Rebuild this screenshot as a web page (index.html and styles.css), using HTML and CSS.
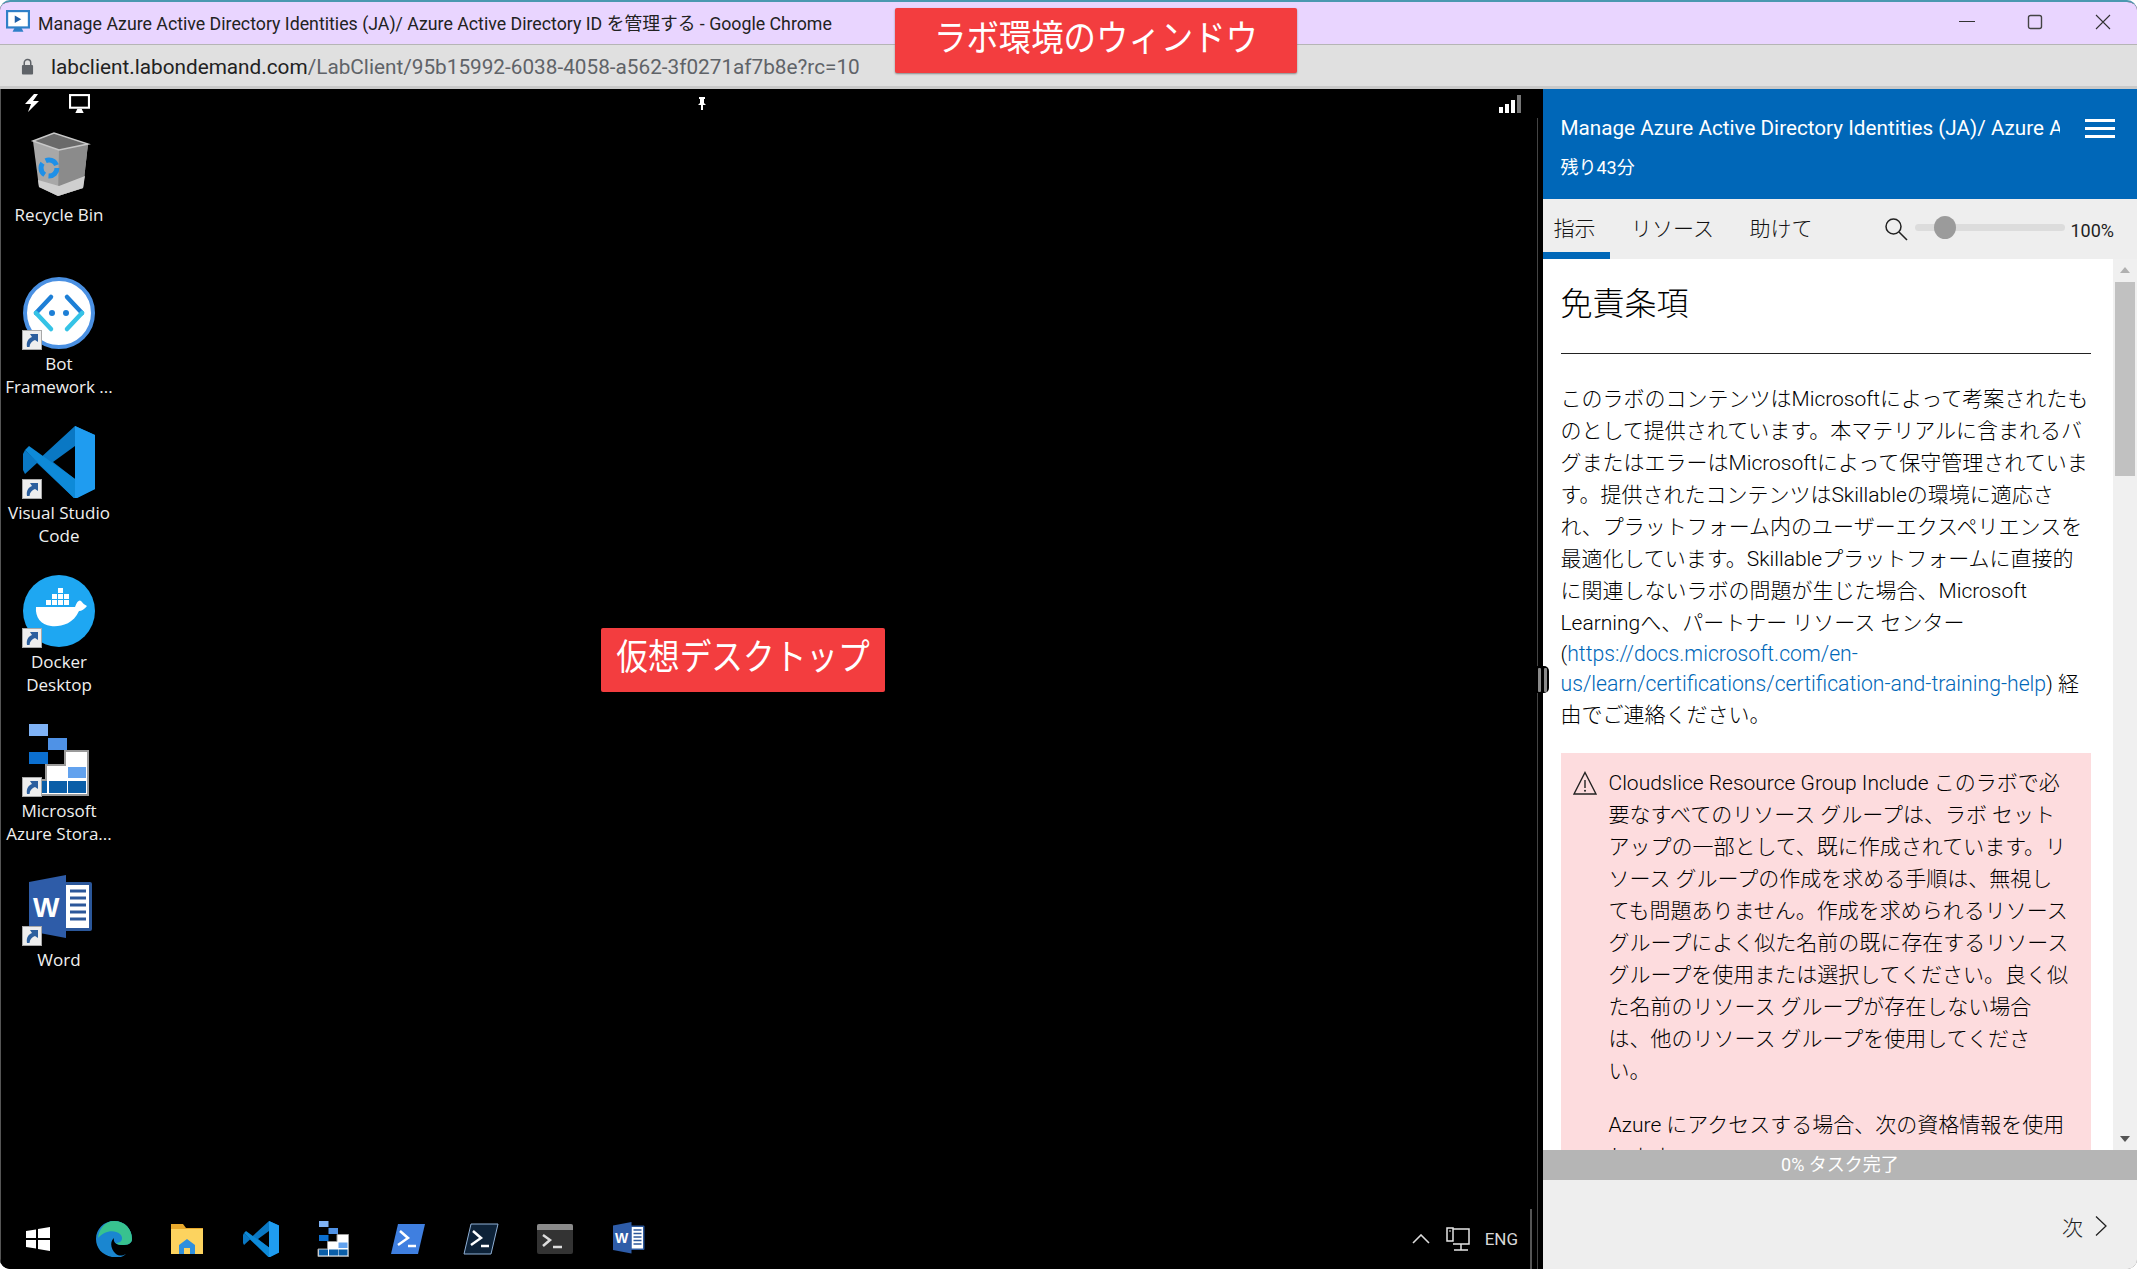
FILE: index.html
```html
<!DOCTYPE html>
<html lang="ja">
<head>
    <meta charset="utf-8"/>
    <title>Manage Azure Active Directory Identities</title>
    <link rel="stylesheet" href="styles.css">
</head>
<body>

<svg class="defs" width="0" height="0">
    <symbol id="shortcut" viewBox="0 0 20 20">
        <rect x="0.500" y="0.500" width="19" height="19" fill="#eeeeee" stroke="#a8a8a8"/>
        <path d="M5 17 C4 11 7 8 10 7 L8 4 H16 V12 L13 10 C10 11 8 13 7.500 17 Z" fill="#2c5f9e"/>
    </symbol>
    <symbol id="storage" viewBox="0 0 72 72">
        <path d="M42 27 H65 V71 H4 V56 H23 V41 H42 Z" fill="#fff" stroke="#9a9a9a" stroke-width="2"/>
        <rect x="6" y="0" width="19" height="12" fill="#7fb2f5"/>
        <rect x="25" y="14" width="19" height="12" fill="#4f92e6"/>
        <rect x="6" y="28" width="19" height="12" fill="#0b6fd0"/>
        <rect x="45" y="43" width="18" height="11" fill="#62a2ee"/>
        <rect x="6" y="57" width="18" height="12" fill="#0a5ea8"/>
        <rect x="26" y="57" width="18" height="12" fill="#0a5ea8"/>
        <rect x="45" y="57" width="18" height="12" fill="#0a5ea8"/>
    </symbol>
    <symbol id="vscode" viewBox="0 0 72 72">
        <path d="M52 0 L72 9 V63 L52 73 L14 37 L2 48 L0 44 V28 L2 24 L14 35 Z M52 20 L30 36 L52 53 Z" fill="#0a78c4" fill-rule="evenodd"/>
        <path d="M52 0 L72 9 V63 L52 73 Z" fill="#1f9cf0"/>
        <path d="M2 24 L6 20 L52 53 V73 Z" fill="#0e8ad8"/>
    </symbol>
    <symbol id="word" viewBox="0 0 72 72">
        <rect x="38" y="9" width="31" height="49" rx="2" fill="#2b579a"/>
        <rect x="43" y="12" width="23" height="43" fill="#fff"/>
        <path d="M47 18 H63 M47 25 H63 M47 32 H63 M47 39 H63 M47 46 H63" stroke="#2b579a" stroke-width="3"/>
        <path d="M6 9 L43 2 V65 L6 58 Z" fill="#2e5ca8"/>
    </symbol>
</svg>

<div class="window">

    <div class="title-bar">
        <svg class="favicon" viewBox="0 0 22 22">
            <rect x="1" y="1" width="20" height="15" fill="#fff" stroke="#2f80c8" stroke-width="2"/>
            <path d="M8 5 L14 8.500 L8 12 Z" fill="#1c5fa8"/>
            <path d="M6 20 H16 L14 16 H8 Z" fill="#2f80c8"/>
        </svg>
        <span class="title-text">Manage Azure Active Directory Identities (JA)/ Azure Active Directory ID を管理する - Google Chrome</span>
        <div class="win-controls">
            <svg viewBox="0 0 16 16"><path d="M0 7.500 H16" stroke="#333" stroke-width="1.200"/></svg>
            <svg viewBox="0 0 16 16"><rect x="1.500" y="1.500" width="13" height="13" rx="2" fill="none" stroke="#444" stroke-width="1.400"/></svg>
            <svg viewBox="0 0 16 16"><path d="M1 1 L15 15 M15 1 L1 15" stroke="#333" stroke-width="1.100"/></svg>
        </div>
    </div>

    <div class="address-bar">
        <svg class="lock" viewBox="0 0 14 18">
            <path d="M3.500 8 V5 a3.500 3.500 0 0 1 7 0 V8" fill="none" stroke="#5f6368" stroke-width="1.600"/>
            <rect x="1" y="7.500" width="12" height="10" rx="1" fill="#5f6368"/>
        </svg>
        <span class="url"><b>labclient.labondemand.com</b>/LabClient/95b15992-6038-4058-a562-3f0271af7b8e?rc=10</span>
    </div>

    <div class="main">

        <div class="desktop">
            <div class="vm-toolbar">
                <svg class="tool-bolt" viewBox="0 0 18 18"><path d="M11 0 L2 10 H8 L5 18 L16 7 H10 L15 0 Z" fill="#fff"/></svg>
                <svg class="tool-screen" viewBox="0 0 20 18"><rect x="1" y="1" width="18" height="12" fill="#000" stroke="#fff" stroke-width="2"/><path d="M6 18 L8 14 H12 L14 18 Z" fill="#fff"/></svg>
                <svg class="tool-pin" viewBox="0 0 10 13"><path d="M2 0 H8 V2 H7 V6 L9 8 H6 V13 H4 V8 H1 L3 6 V2 H2 Z" fill="#fff"/></svg>
                <div class="signal"><i class="b1"></i><i class="b2"></i><i class="b3"></i><i class="b4"></i></div>
            </div>

            <div class="desktop-icons">
                <div class="desk-item">
                    <div class="desk-icon">
                        <svg viewBox="0 0 72 72">
                            <path d="M10 13 L31 5 L65 16 L60 60 L35 68 L16 59 Z" fill="#a8a8a8"/>
                            <path d="M36 22 L65 16 L60 60 L35 68 Z" fill="#8b8b8b"/>
                            <path d="M10 13 L31 5 L65 16 L36 22 Z" fill="#6a6a6a" stroke="#c8c8c8" stroke-width="1.500"/>
                            <path d="M15 52 L36 58 L62 48 L60 60 L35 68 L16 59 Z" fill="#cfcfcf"/>
                            <circle cx="26" cy="40" r="8" fill="none" stroke="#1e90e8" stroke-width="5" stroke-dasharray="13 4"/>
                        </svg>
                    </div>
                    <div class="desk-label">Recycle Bin</div>
                </div>
                <div class="desk-item">
                    <div class="desk-icon">
                        <svg viewBox="0 0 72 72">
                            <circle cx="36" cy="36" r="34" fill="#fff" stroke="#4a90e2" stroke-width="4"/>
                            <path d="M28 20 L13 36" fill="none" stroke="#1d7fd6" stroke-width="4.500" stroke-linecap="round"/>
                            <path d="M13 36 L28 52" fill="none" stroke="#35c3e6" stroke-width="4.500" stroke-linecap="round"/>
                            <path d="M44 20 L59 36" fill="none" stroke="#1d7fd6" stroke-width="4.500" stroke-linecap="round"/>
                            <path d="M59 36 L44 52" fill="none" stroke="#35c3e6" stroke-width="4.500" stroke-linecap="round"/>
                            <circle cx="29" cy="36" r="3" fill="#1d7fd6"/>
                            <circle cx="43" cy="36" r="3" fill="#1d7fd6"/>
                        </svg>
                        <svg class="shortcut"><use href="#shortcut"/></svg>
                    </div>
                    <div class="desk-label">Bot<br>Framework ...</div>
                </div>
                <div class="desk-item">
                    <div class="desk-icon">
                        <svg viewBox="0 0 72 72"><use href="#vscode"/></svg>
                        <svg class="shortcut"><use href="#shortcut"/></svg>
                    </div>
                    <div class="desk-label">Visual Studio<br>Code</div>
                </div>
                <div class="desk-item">
                    <div class="desk-icon">
                        <svg viewBox="0 0 72 72">
                            <circle cx="36" cy="36" r="36" fill="#1ea7f2"/>
                            <path d="M13 32 H52 Q55 24 58 26 Q60 29 64 31 Q60 36 56 36 C50 50 36 52 28 51 C18 50 12 42 13 32 Z" fill="#fff"/>
                            <path d="M23 25 h5 v5 h-5 z M29 25 h5 v5 h-5 z M35 25 h5 v5 h-5 z M41 25 h5 v5 h-5 z M29 19 h5 v5 h-5 z M35 19 h5 v5 h-5 z M41 19 h5 v5 h-5 z M35 13 h5 v5 h-5 z" fill="#fff"/>
                        </svg>
                        <svg class="shortcut"><use href="#shortcut"/></svg>
                    </div>
                    <div class="desk-label">Docker<br>Desktop</div>
                </div>
                <div class="desk-item">
                    <div class="desk-icon">
                        <svg viewBox="0 0 72 72"><use href="#storage"/></svg>
                        <svg class="shortcut"><use href="#shortcut"/></svg>
                    </div>
                    <div class="desk-label">Microsoft<br>Azure Stora...</div>
                </div>
                <div class="desk-item">
                    <div class="desk-icon">
                        <svg viewBox="0 0 72 72">
                            <use href="#word"/>
                            <text x="10" y="44" class="word-w">W</text>
                        </svg>
                        <svg class="shortcut"><use href="#shortcut"/></svg>
                    </div>
                    <div class="desk-label">Word</div>
                </div>
            </div>

            <div class="taskbar">
                <div class="task-icons">
                    <svg viewBox="2 0 36 36">
                        <path d="M6 10 L16 8.500 V17 H6 Z M18 8 L30 6 V17 H18 Z M6 19 H16 V27.500 L6 26 Z M18 19 H30 V30 L18 28 Z" fill="#fff"/>
                    </svg>
                    <svg viewBox="0 0 36 36">
                        <path d="M18 0 C29 0 36 8 36 18 C36 23 31 24 26 24 C20 24 17 21 18 17 C14 20 14 28 20 33 C24 36 28 34 30 33 C26 37 20 37 16 36 C6 34 0 27 0 18 C0 8 8 0 18 0 Z" fill="#1a86d0"/>
                        <path d="M18 0 C29 0 36 8 36 18 C36 23 31 24 26 24 C23 24 21 23 20 22 C26 22 28 17 24 13 C18 8 8 10 2 17 C3 8 9 0 18 0 Z" fill="#38c28f"/>
                    </svg>
                    <svg viewBox="0 0 36 36">
                        <path d="M2 3 H14 L17 7 H34 V33 H2 Z" fill="#e8a92c"/>
                        <rect x="2" y="8" width="32" height="25" fill="#fcd35f"/>
                        <path d="M10 33 V24 L18 18 L26 24 V33 H21 V27 H15 V33 Z" fill="#2e8fde"/>
                    </svg>
                    <svg viewBox="0 0 72 72"><use href="#vscode"/></svg>
                    <svg viewBox="0 0 72 72"><use href="#storage"/></svg>
                    <svg viewBox="0 0 36 36">
                        <path d="M8 3 H35 L28 33 H1 Z" fill="#3f7fe0"/>
                        <path d="M10 10 L18 17 L8 24" fill="none" stroke="#fff" stroke-width="2.500"/>
                        <path d="M18 25 H26" stroke="#fff" stroke-width="2.500"/>
                    </svg>
                    <svg viewBox="0 0 36 36">
                        <path d="M8 3 H35 L28 33 H1 Z" fill="#0d2238" stroke="#8fb0d6"/>
                        <path d="M10 10 L18 17 L8 24" fill="none" stroke="#fff" stroke-width="2.500"/>
                        <path d="M18 25 H26" stroke="#fff" stroke-width="2.500"/>
                    </svg>
                    <svg viewBox="0 0 36 36">
                        <rect x="0" y="3" width="36" height="30" rx="2" fill="#333"/>
                        <path d="M0 5 a2 2 0 0 1 2 -2 H34 a2 2 0 0 1 2 2 V9 H0 Z" fill="#8a8a8a"/>
                        <path d="M6 14 L13 19 L6 25" fill="none" stroke="#ddd" stroke-width="2.500"/>
                        <path d="M16 26 H25" stroke="#ddd" stroke-width="2.500"/>
                    </svg>
                    <svg viewBox="0 0 72 72">
                        <use href="#word"/>
                        <text x="10" y="44" class="word-w">W</text>
                    </svg>
                </div>
                <div class="tray">
                    <svg class="tray-chevron" viewBox="0 0 18 10"><path d="M1 9 L9 1 L17 9" fill="none" stroke="#ddd" stroke-width="1.600"/></svg>
                    <svg class="tray-net" viewBox="0 0 24 26">
                        <path d="M7 3 H23 V18 H7 M15 18 V24 M8 24 H22" fill="none" stroke="#e6e6e6" stroke-width="1.500"/>
                        <rect x="1" y="2" width="6" height="13" fill="#000" stroke="#e6e6e6" stroke-width="1.500"/>
                        <path d="M3 5 H5" stroke="#e6e6e6"/>
                    </svg>
                    <span class="tray-lang">ENG</span>
                </div>
            </div>

            <div class="badge badge-desktop"><span>仮想デスクトップ</span></div>
            <div class="edge-line"></div>
            <div class="splitter"><i></i><i></i></div>
        </div>

        <div class="panel">
            <div class="panel-head">
                <div class="panel-head-row">
                    <div class="lab-title">Manage Azure Active Directory Identities (JA)/ Azure Active Directory ID を管理する</div>
                    <div class="burger"><i></i><i></i><i></i></div>
                </div>
                <div class="time-left">残り43分</div>
            </div>

            <div class="tabs">
                <div class="tab active">指示</div>
                <div class="tab">リソース</div>
                <div class="tab">助けて</div>
                <svg class="zoom-icon" viewBox="0 0 24 24">
                    <circle cx="9.500" cy="9.500" r="7.500" fill="none" stroke="#222" stroke-width="1.500"/>
                    <path d="M15 15 L23 23" stroke="#222" stroke-width="1.600"/>
                </svg>
                <div class="slider"><div class="slider-thumb"></div></div>
                <span class="zoom-value">100%</span>
            </div>

            <div class="panel-body">
                <div class="content">
                    <h1>免責条項</h1>
                    <p class="text">
                        <span class="line">このラボのコンテンツはMicrosoftによって考案されたも</span>
                        <span class="line">のとして提供されています。本マテリアルに含まれるバ</span>
                        <span class="line">グまたはエラーはMicrosoftによって保守管理されていま</span>
                        <span class="line">す。提供されたコンテンツはSkillableの環境に適応さ</span>
                        <span class="line">れ、プラットフォーム内のユーザーエクスペリエンスを</span>
                        <span class="line">最適化しています。Skillableプラットフォームに直接的</span>
                        <span class="line">に関連しないラボの問題が生じた場合、Microsoft</span>
                        <span class="line">Learningへ、パートナー リソース センター</span>
                        <span class="line line-short">(<a href="#">https://docs.microsoft.com/en-</a></span>
                        <span class="line line-short"><a href="#">us/learn/certifications/certification-and-training-help</a>) 経</span>
                        <span class="line">由でご連絡ください。</span>
                    </p>
                    <div class="alert">
                        <svg class="alert-icon" viewBox="0 0 24 24">
                            <path d="M12 1.500 L23 23 H1 Z" fill="none" stroke="#222" stroke-width="1.400"/>
                            <path d="M12 9 V17" stroke="#222" stroke-width="1.400"/>
                            <circle cx="12" cy="19.700" r="1" fill="#222"/>
                        </svg>
                        <div class="alert-text">
                            <p>
                                <span class="line">Cloudslice Resource Group Include このラボで必</span>
                                <span class="line">要なすべてのリソース グループは、ラボ セット</span>
                                <span class="line">アップの一部として、既に作成されています。リ</span>
                                <span class="line">ソース グループの作成を求める手順は、無視し</span>
                                <span class="line">ても問題ありません。作成を求められるリソース</span>
                                <span class="line">グループによく似た名前の既に存在するリソース</span>
                                <span class="line">グループを使用または選択してください。良く似</span>
                                <span class="line">た名前のリソース グループが存在しない場合</span>
                                <span class="line">は、他のリソース グループを使用してくださ</span>
                                <span class="line">い。</span>
                            </p>
                            <p>
                                <span class="line">Azure にアクセスする場合、次の資格情報を使用</span>
                                <span class="line">します。</span>
                            </p>
                        </div>
                    </div>
                </div>
                <div class="scrollbar">
                    <div class="arrow-up"></div>
                    <div class="thumb"></div>
                    <div class="arrow-down"></div>
                </div>
            </div>

            <div class="progress">0% タスク完了</div>

            <div class="panel-foot">
                <span>次</span>
                <svg class="next-icon" viewBox="0 0 12 20"><path d="M1 0.500 L11 10 L1 19.500" fill="none" stroke="#222" stroke-width="1.300"/></svg>
            </div>
        </div>
    </div>

    <div class="badge badge-window"><span>ラボ環境のウィンドウ</span></div>
</div>

</body>
</html>
```
FILE: styles.css
```css
html, body {
    margin: 0;
    padding: 0;
    background: #fff;
}

body {
    font-family: Roboto, "Noto Sans CJK JP", sans-serif;
    color: #222;
}

.defs {
    position: absolute;
}

.window {
    position: relative;
    width: 2137px;
    height: 1269px;
    box-sizing: border-box;
    display: flex;
    flex-direction: column;
    border-top: 2px solid #4a98b0;
    border-radius: 10px;
    overflow: hidden;
    background: #000;
}

/* title bar + address bar */
.title-bar {
    height: 43px;
    flex: none;
    display: flex;
    align-items: center;
    padding-left: 6px;
    padding-bottom: 2px;
    box-sizing: border-box;
    background: #e9d5ff;
    border-bottom: 1px solid #b5b5b5;
}

.favicon {
    width: 24px;
    height: 24px;
    margin-right: 8px;
}

.title-text {
    font-size: 17.750px;
    color: #222;
}

.win-controls {
    margin-left: auto;
    display: flex;
    gap: 52px;
    padding-right: 26px;
}

.win-controls svg {
    width: 16px;
    height: 16px;
}

.address-bar {
    height: 44px;
    flex: none;
    box-sizing: border-box;
    display: flex;
    align-items: center;
    padding-left: 21px;
    padding-top: 2px;
    background: #e0e0e0;
    border-bottom: 3px solid #c9c9c9;
}

.lock {
    width: 13px;
    height: 17px;
    margin-right: 17px;
}

.url {
    font-size: 20.750px;
    color: #5f6368;
}

.url b {
    font-weight: 400;
    color: #222;
}

/* virtual desktop */
.main {
    flex: 1;
    min-height: 0;
    display: flex;
}

.desktop {
    position: relative;
    flex: 1;
    display: flex;
    flex-direction: column;
    background: #000;
    border-left: 1px solid #555;
}

.vm-toolbar {
    height: 28px;
    flex: none;
    display: flex;
    align-items: center;
}

.tool-bolt {
    width: 18px;
    height: 18px;
    margin-left: 22px;
}

.tool-screen {
    width: 21px;
    height: 19px;
    margin-left: 28px;
}

.tool-pin {
    width: 10px;
    height: 13px;
    margin-left: 607px;
}

.signal {
    display: flex;
    align-items: flex-end;
    gap: 2px;
    height: 19px;
    margin-left: 792px;
}

.signal i {
    width: 4px;
    background: #fff;
}

.signal .b1 { height: 6px; }
.signal .b2 { height: 9px; }
.signal .b3 { height: 13px; }
.signal .b4 { height: 18px; background: #777; }

.desktop-icons {
    padding-top: 11px;
    width: 116px;
    flex: none;
}

.desk-item {
    height: 149px;
    text-align: center;
}

.desk-icon {
    position: relative;
    width: 72px;
    height: 72px;
    margin: 0 auto;
}

.desk-icon > svg {
    display: block;
    width: 72px;
    height: 72px;
}

.desk-icon > .shortcut {
    position: absolute;
    left: -1px;
    bottom: -1px;
    width: 20px;
    height: 20px;
}

.desk-label {
    margin-top: 3px;
    font-family: "Open Sans", sans-serif;
    font-size: 17px;
    line-height: 23px;
    color: #f0f0f0;
    white-space: nowrap;
}

.word-w {
    font-family: "Liberation Sans", sans-serif;
    font-size: 28px;
    font-weight: 700;
    fill: #fff;
}

.taskbar {
    margin-top: auto;
    height: 60px;
    flex: none;
    display: flex;
    align-items: center;
}

.task-icons {
    display: flex;
    gap: 37.500px;
    padding-left: 21px;
}

.task-icons svg {
    width: 36px;
    height: 36px;
    display: block;
}

.tray {
    margin-left: auto;
    height: 100%;
    display: flex;
    align-items: center;
    padding-right: 12px;
    border-right: 2px solid #555;
    margin-right: 11px;
}

.tray-chevron {
    width: 18px;
    height: 10px;
    margin-right: 16px;
}

.tray-net {
    width: 24px;
    height: 26px;
    margin-right: 15px;
}

.tray-lang {
    font-size: 17px;
    color: #d8d8d8;
}

.edge-line {
    position: absolute;
    right: 5px;
    top: 29px;
    bottom: 0;
    width: 1px;
    background: #444;
}

.splitter {
    position: absolute;
    right: -6px;
    top: 577px;
    width: 13px;
    height: 27px;
    box-sizing: border-box;
    display: flex;
    justify-content: center;
    align-items: center;
    gap: 3px;
    background: #000;
    border-radius: 0 5px 5px 0;
    z-index: 2;
}

.splitter i {
    width: 3px;
    height: 24px;
    border-radius: 1px;
    background: #8a8a8a;
}

/* red annotations sitting over the shot */
.badge {
    position: absolute;
    background: #f33d3f;
    color: #fff;
    display: flex;
    align-items: center;
    justify-content: center;
    border-radius: 2px;
    font-size: 36px;
    box-sizing: border-box;
    z-index: 3;
}

.badge span {
    white-space: nowrap;
    transform: scaleX(0.9);
}

.badge-window {
    left: 895px;
    top: 6px;
    width: 402px;
    height: 65px;
    padding-bottom: 12px;
    box-shadow: 0 1px 2px #888;
}

.badge-desktop {
    left: 600px;
    top: 539px;
    width: 284px;
    height: 64px;
    padding-bottom: 12px;
}

.badge-desktop span {
    transform: scaleX(0.88);
}

/* lab instructions panel */
.panel {
    width: 594px;
    flex: none;
    display: flex;
    flex-direction: column;
    background: #eee;
}

.panel-head {
    height: 110px;
    flex: none;
    box-sizing: border-box;
    padding: 22px 22px 0 17.500px;
    background: #0067b8;
    color: #fff;
}

.panel-head-row {
    display: flex;
    justify-content: space-between;
    align-items: center;
}

.lab-title {
    width: 499px;
    font-size: 20.700px;
    line-height: 34px;
    white-space: nowrap;
    overflow: hidden;
}

.burger {
    width: 30px;
    display: flex;
    flex-direction: column;
    gap: 5px;
}

.burger i {
    display: block;
    height: 3px;
    background: #fff;
}

.time-left {
    margin-top: 11px;
    font-size: 18px;
    line-height: 24px;
}

.tabs {
    position: relative;
    height: 60px;
    flex: none;
    display: flex;
    align-items: flex-start;
    gap: 11px;
}

.tab {
    height: 60px;
    box-sizing: border-box;
    padding: 14px 14px 0 10.500px;
    font-size: 21px;
    line-height: 32px;
    font-weight: 300;
    color: #111;
}

.tab.active {
    border-bottom: 7px solid #0067b8;
}

.zoom-icon {
    width: 24px;
    height: 24px;
    margin: 18px 0 0 auto;
}

.slider {
    width: 150px;
    height: 7px;
    margin: 25px 0 0 -4px;
    background: #dcdcdc;
    border-radius: 4px;
    position: relative;
}

.slider-thumb {
    position: absolute;
    left: 19px;
    top: -8px;
    width: 22px;
    height: 23px;
    border-radius: 50%;
    background: #9b9b9b;
}

.zoom-value {
    margin: 21px 23px 0 -6px;
    font-size: 18px;
    line-height: 22px;
}

.panel-body {
    flex: 1;
    min-height: 0;
    display: flex;
    overflow: hidden;
}

.content {
    flex: 1;
    min-width: 0;
    box-sizing: border-box;
    padding: 0 22px 0 17.500px;
    background: #fff;
    font-size: 21px;
    font-weight: 300;
    color: #000;
}

.content h1 {
    margin: 0;
    height: 95px;
    box-sizing: border-box;
    padding-top: 22px;
    font-size: 32px;
    line-height: 46px;
    font-weight: 300;
    border-bottom: 1px solid #222;
}

.text {
    margin: 29px 0 0;
}

.line {
    display: block;
    height: 32px;
    line-height: 32px;
    white-space: nowrap;
}

.line-short {
    height: 30px;
    line-height: 30px;
}

.content a {
    color: #0067b8;
    text-decoration: none;
    font-size: 21.200px;
}

.alert {
    margin-top: 22px;
    display: flex;
    padding: 14px 0 0 12px;
    background: #fddcde;
    height: 600px;
}

.alert-icon {
    width: 24px;
    height: 24px;
    margin: 4px 12px 0 0;
    flex: none;
}

.alert-text p {
    margin: 0 0 22px;
}

.scrollbar {
    width: 24px;
    flex: none;
    position: relative;
    background: #f0f0f0;
}

.arrow-up {
    position: absolute;
    left: 7px;
    top: 8px;
    border-left: 5px solid transparent;
    border-right: 5px solid transparent;
    border-bottom: 6px solid #b0b0b0;
}

.thumb {
    margin: 23px 2px 0;
    height: 194px;
    background: #c1c1c1;
}

.arrow-down {
    position: absolute;
    left: 7px;
    bottom: 8px;
    border-left: 5px solid transparent;
    border-right: 5px solid transparent;
    border-top: 6px solid #555;
}

.progress {
    height: 30px;
    flex: none;
    background: #b5b5b5;
    color: #fff;
    text-align: center;
    font-size: 18px;
    line-height: 30px;
}

.panel-foot {
    height: 89px;
    flex: none;
    box-sizing: border-box;
    display: flex;
    justify-content: flex-end;
    align-items: center;
    gap: 12px;
    padding: 3px 30px 0 0;
    font-size: 21px;
    font-weight: 300;
    background: #eee;
}

.next-icon {
    width: 12px;
    height: 20px;
}
```
